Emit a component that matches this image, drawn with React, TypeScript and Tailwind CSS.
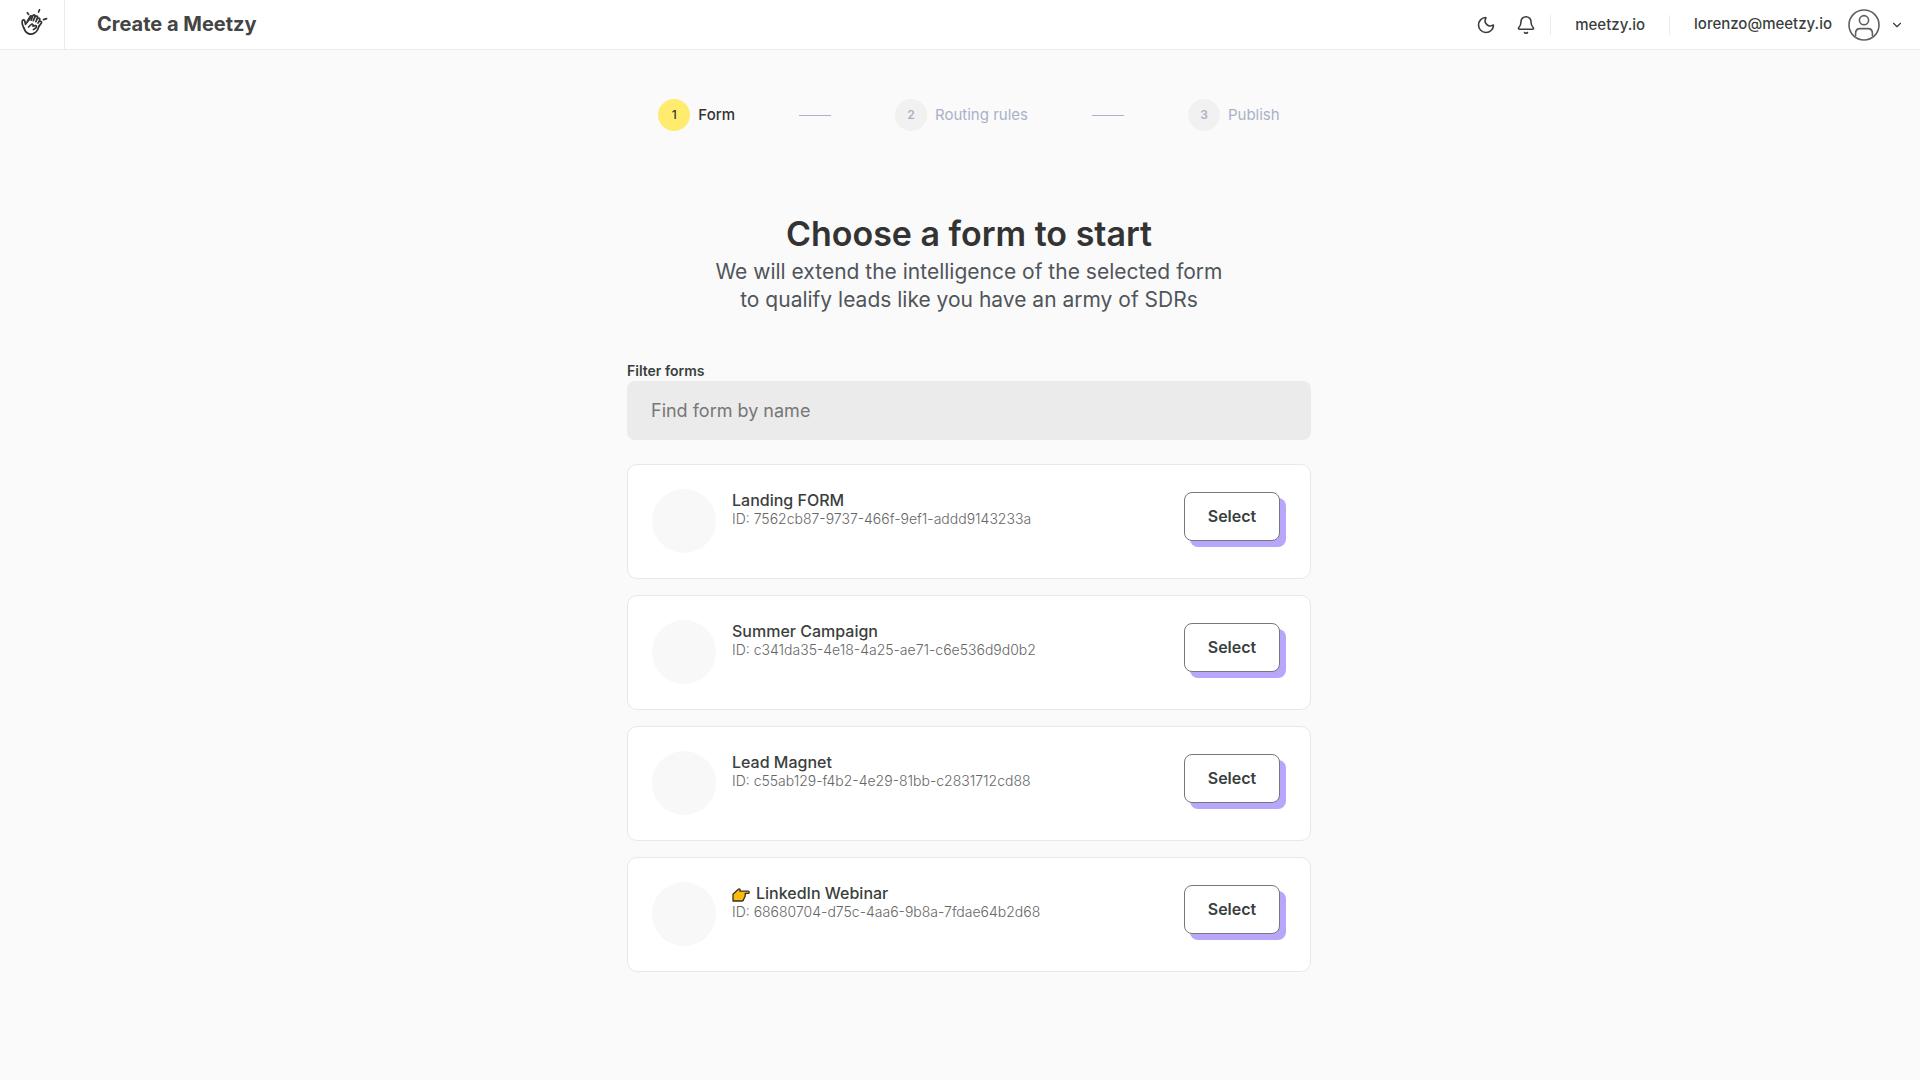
import { useState } from "react";
import { Bell, ChevronDown, Moon } from "lucide-react";

const STEPS = ["Form", "Routing rules", "Publish"];

const FORMS = [
  { id: "7562cb87-9737-466f-9ef1-addd9143233a", name: "Landing FORM", pointer: false },
  { id: "c341da35-4e18-4a25-ae71-c6e536d9d0b2", name: "Summer Campaign", pointer: false },
  { id: "c55ab129-f4b2-4e29-81bb-c2831712cd88", name: "Lead Magnet", pointer: false },
  { id: "68680704-d75c-4aa6-9b8a-7fdae64b2d68", name: "LinkedIn Webinar", pointer: true },
];

function Logo() {
  return (
    <svg viewBox="0 0 28 28" className="h-7 w-7" fill="none" stroke="#333" strokeWidth="1.7" strokeLinecap="round" strokeLinejoin="round">
      <path d="M4.2 19.5C2.4 16.5 1.9 13.5 2.3 11.9c.5-1.4 2.2-1.2 2.5.2l.7 3.2 5-6.3" />
      <path d="M4.2 19.5c1.3 5.3 6.4 6.9 10.2 4.6 3-1.8 3.9-4.3 4.6-7" />
      <path d="M8.6 18l2.6-2.5c1.3-.9 2.5.4 1.8 1.7l1.9-.6c1.7-.3 2.2 1.6.9 2.4l-2.4 1.6" />
      <path d="M7.4 12.2l2.6-4.6c.9-1.3 2.6-.4 2.1 1l-1 2.6" />
      <path d="M12 8.2l1-1.7c1-1.2 2.6-.3 2 1.1l-1.7 4" />
      <path d="M15.2 7.8c1-1.4 2.8-.6 2.3.8l-1.6 4" />
      <path d="M17.6 9.6c1.5-1 2.8.2 2.1 1.5l-1.7 3" />
      <path d="M19.8 12.4c1.5-.5 2.2.8 1.5 1.8L19 17.1" />
      <path d="M8.6 5.4L7.4 3.8M18.6 3l.9-2.2M23.6 10.6l2.9-1" />
    </svg>
  );
}

function Avatar() {
  return (
    <svg viewBox="0 0 32 32" className="h-8 w-8" fill="none" stroke="#5f5f5f" strokeWidth="1.6" strokeLinecap="round">
      <circle cx="16" cy="16" r="15" />
      <circle cx="16" cy="11.2" r="4.6" />
      <path d="M7.6 26.5v-2.3c0-2.7 1.9-4.6 4.6-4.6h7.6c2.7 0 4.6 1.9 4.6 4.6v2.3" />
    </svg>
  );
}

function PointingHand() {
  return (
    <svg viewBox="0 0 18 14" className="mt-1 h-3.5 w-[18px]" fill="#fdb90f" stroke="#33302a" strokeWidth="1.3" strokeLinejoin="round">
      <path d="M1 6.2L6.3 1.2c.9-.7 2.1-.2 1.8 1l-.3 1h8.4c1.3 0 1.3 2.2 0 2.2h-3.1c.6.7.5 1.5-.1 2 .3.8.1 1.5-.6 1.9.2.8-.1 1.4-.8 1.7 0 1.2-.7 2-1.8 2H1z" />
    </svg>
  );
}

function Steps({ current }: { current: number }) {
  return (
    <ol className="flex items-center justify-center gap-16">
      {STEPS.map((label, i) => (
        <li key={label} className="flex items-center gap-16">
          {i > 0 && <span className="h-px w-8 bg-[#a9b1d0]" />}
          <span className="flex items-center gap-2">
            <span
              className={`flex h-8 w-8 items-center justify-center rounded-full text-xs ${i === current ? "bg-[#ffec6e] font-medium text-[#333]" : "bg-[#f1f1f1] font-semibold text-[#a9b1c9]"}`}
            >
              {i + 1}
            </span>
            <span className={`text-[15px] leading-6 ${i === current ? "font-medium text-[#333]" : "text-[#a9b1c9]"}`}>{label}</span>
          </span>
        </li>
      ))}
    </ol>
  );
}

function FormCard({ form, onSelect }: { form: (typeof FORMS)[number]; onSelect: () => void }) {
  return (
    <li className="flex items-start gap-4 rounded-[10px] border border-[#e8e8e8] bg-white px-6 pt-6 pb-[25px]">
      <div className="h-16 w-16 rounded-full bg-[#f8f8f8]" />
      <div className="flex-1 pt-px">
        <h2 className="flex items-center gap-1.5 text-base leading-5 font-medium text-[#3a3f3e]">
          {form.pointer && <PointingHand />}
          {form.name}
        </h2>
        <p className="text-sm leading-[18px] font-light text-[#666]">ID: {form.id}</p>
      </div>
      <button
        onClick={onSelect}
        className="mt-[3px] mr-1.5 h-[49px] w-24 cursor-pointer rounded-lg border border-[#777] bg-white pb-0.5 text-base font-semibold text-[#3a3f3e] shadow-[6px_6px_0_#b8a6fa]"
      >
        Select
      </button>
    </li>
  );
}

export default function App() {
  const [query, setQuery] = useState("");
  const [, setSelected] = useState<string | null>(null);
  const forms = FORMS.filter((f) => f.name.toLowerCase().includes(query.toLowerCase()));

  return (
    <div className="min-h-screen bg-[#fafafa] font-['Inter',sans-serif] text-[#3a3f3e]">
      <header className="flex h-[50px] items-center border-b border-[#ebebeb] bg-white">
        <a href="#" aria-label="Home" className="flex h-full w-[65px] items-center justify-center border-r border-[#ebebeb] pb-1 pl-1">
          <Logo />
        </a>
        <h1 className="pb-0.5 pl-8 text-xl font-bold text-[#444]">Create a Meetzy</h1>
        <div className="ml-auto flex items-center pr-4 text-[15px] font-medium">
          <button aria-label="Dark mode" className="mr-5">
            <Moon size={20} strokeWidth={1.9} />
          </button>
          <button aria-label="Notifications" className="mr-3.5">
            <Bell size={20} strokeWidth={1.9} />
          </button>
          <a href="#" className="border-x border-[#ebebeb] px-6 leading-5">meetzy.io</a>
          <button className="flex items-center pl-6">
            lorenzo@meetzy.io
            <span className="mr-2.5 ml-4"><Avatar /></span>
            <ChevronDown size={14} />
          </button>
        </div>
      </header>

      <main className="pt-[49px] pb-24 pl-[18px]">
        <Steps current={0} />

        <div className="mt-[83px] text-center">
          <h2 className="text-[34px] leading-10 font-semibold text-[#333]">Choose a form to start</h2>
          <p className="mt-1 text-[21px] leading-7 text-[#50555a]">
            We will extend the intelligence of the selected form
            <br />
            to qualify leads like you have an army of SDRs
          </p>
        </div>

        <div className="mx-auto mt-[47px] max-w-[684px]">
          <label htmlFor="filter" className="block text-sm leading-5 font-semibold">Filter forms</label>
          <input
            id="filter"
            type="text"
            value={query}
            onChange={(e) => setQuery(e.target.value)}
            placeholder="Find form by name"
            className="block h-[59px] w-full rounded-lg bg-[#ebebeb] px-6 text-lg outline-none placeholder:text-[#777]"
          />
          <ul className="mt-6 flex flex-col gap-4">
            {forms.map((f) => (
              <FormCard key={f.id} form={f} onSelect={() => setSelected(f.id)} />
            ))}
          </ul>
        </div>
      </main>
    </div>
  );
}
